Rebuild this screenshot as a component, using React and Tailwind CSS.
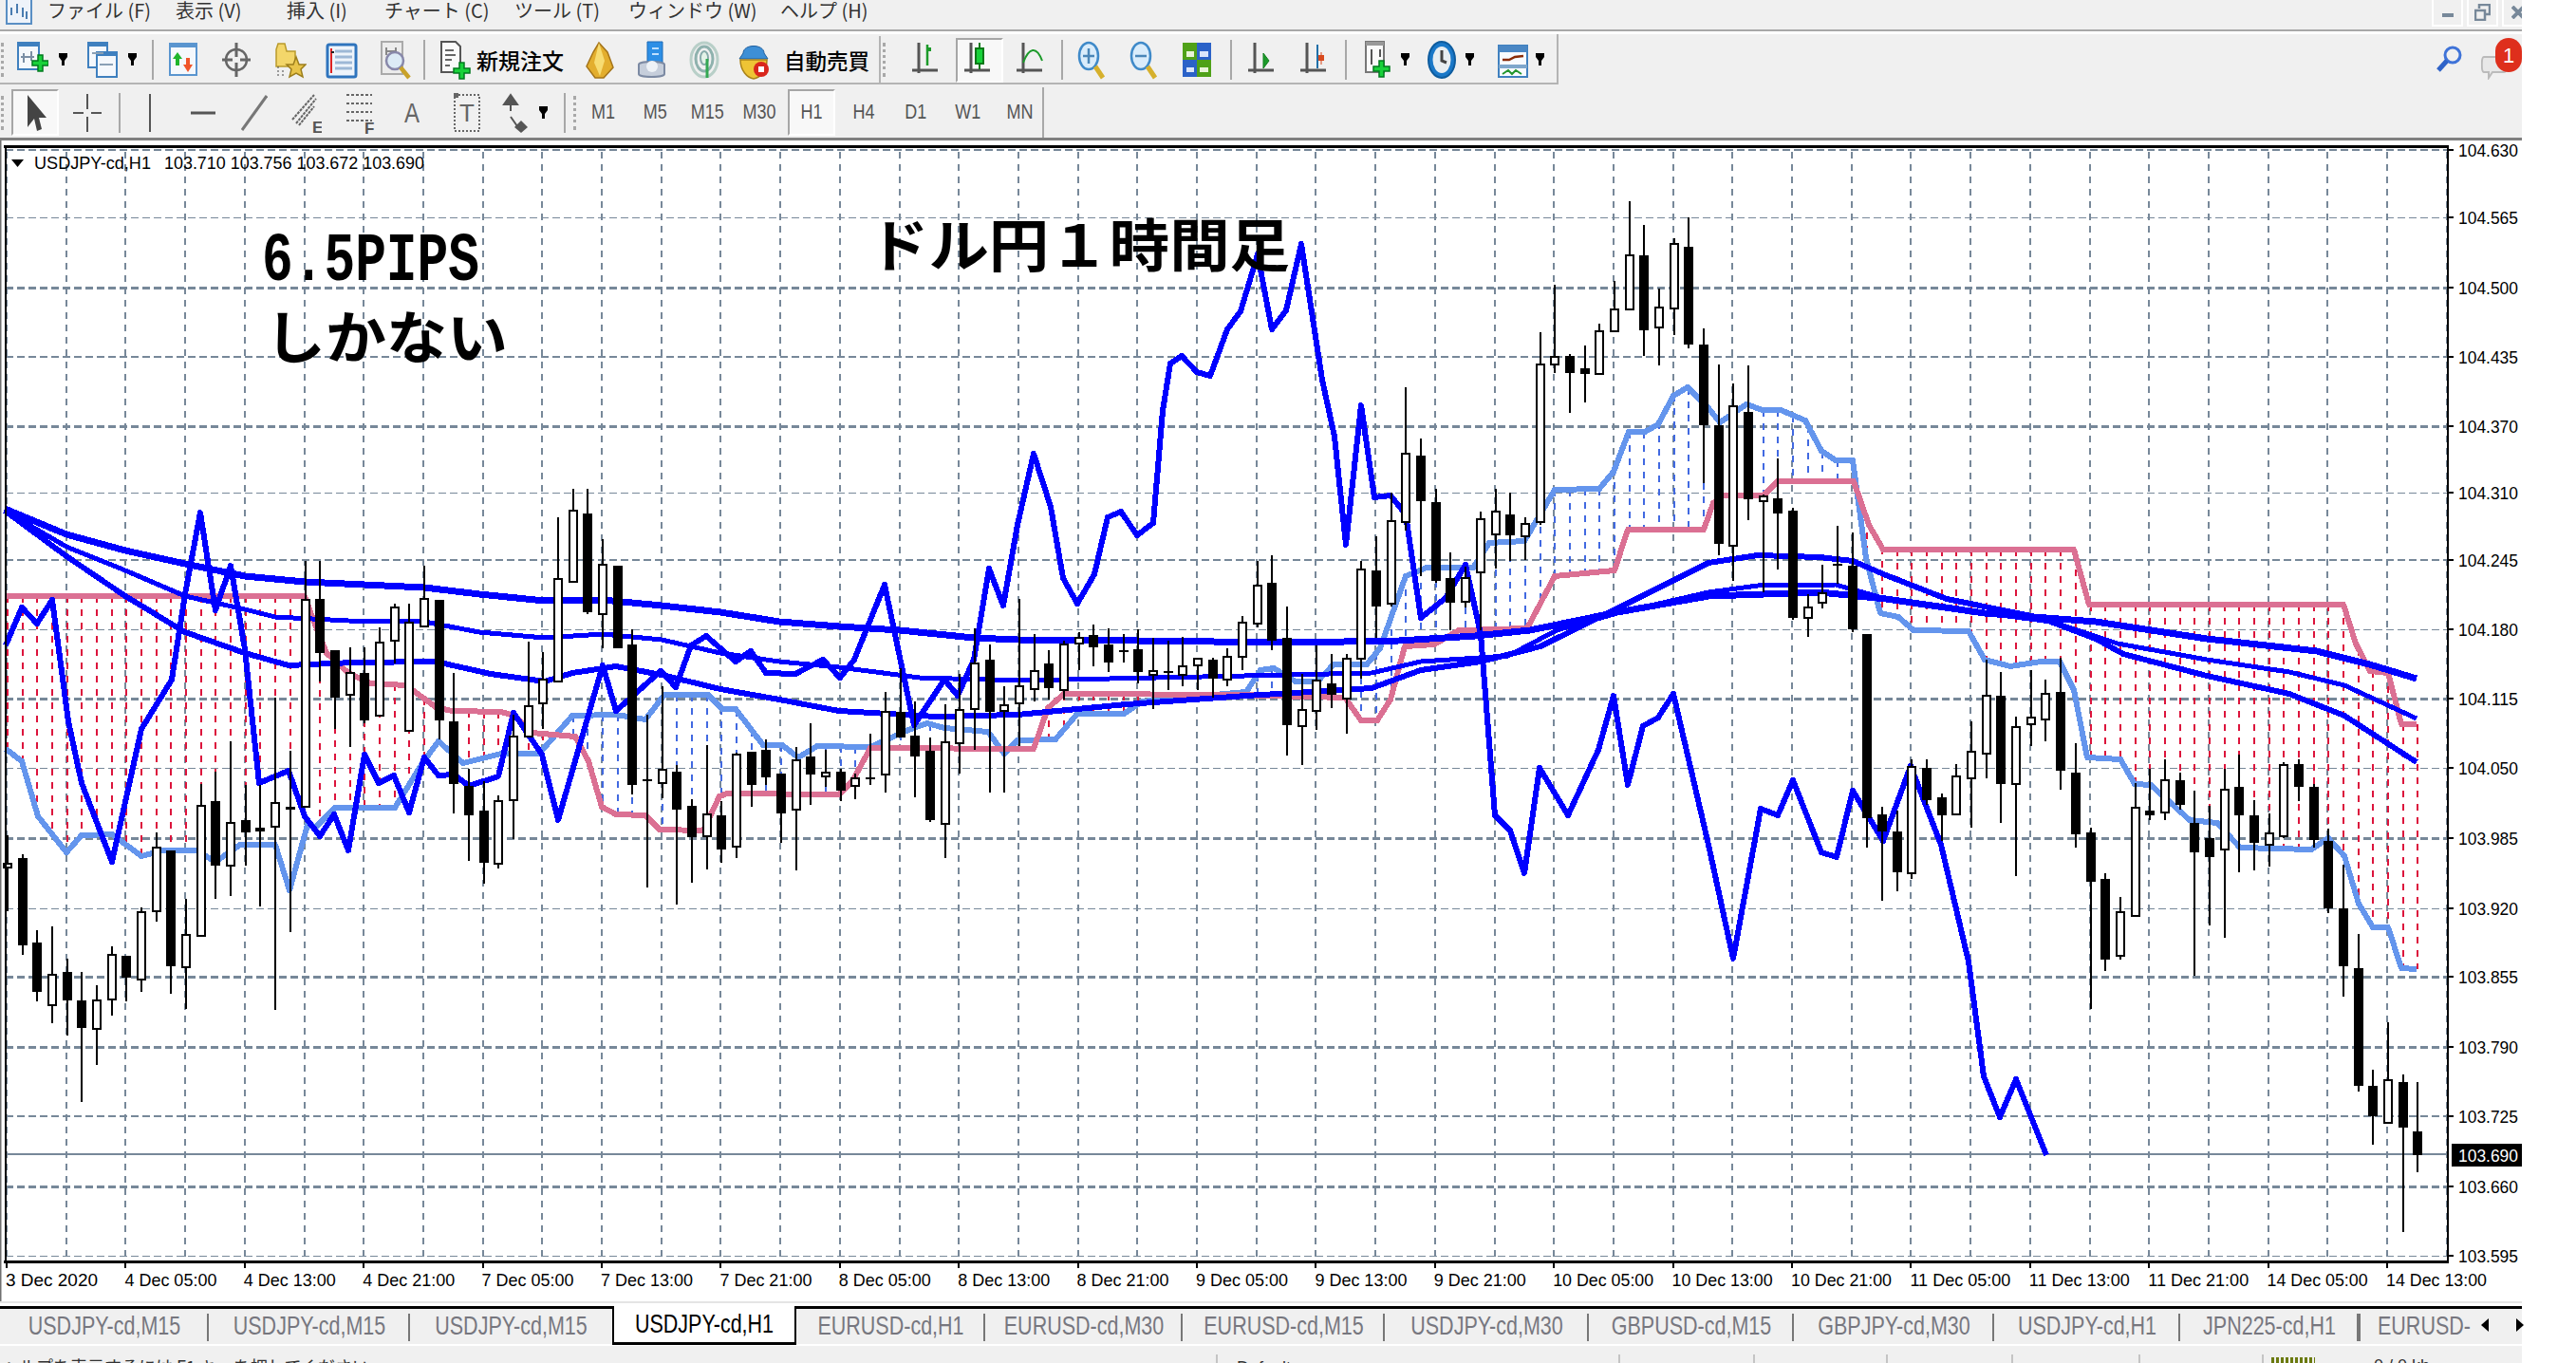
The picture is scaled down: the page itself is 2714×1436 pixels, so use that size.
const C = [
[910,914,880,960,0],[904,996,900,1006,1],[993,1045,980,1055,1],[1027,1059,976,1078,0],[1024,1054,1010,1091,1],[1054,1083,1024,1161,1],[1054,1084,1038,1122,0],[1006,1053,997,1070,0],[1007,1030,1007,1055,1],[961,1032,956,1045,0],
[893,960,877,971,0],[896,1018,896,1047,1],[985,1019,947,1063,0],[849,986,826,986,0],[844,912,813,947,1],[867,912,781,944,0],[864,877,827,912,1],[872,876,827,955,1],[846,871,735,1064,0],[850,853,791,982,1],
[632,850,591,850,0],[631,688,591,718,1],[685,735,685,768,1],[709,732,682,787,0],[709,759,682,762,1],[677,754,661,754,0],[640,675,636,699,0],[656,770,636,770,0],[631,660,596,660,0],[632,759,632,779,1],
[760,826,709,857,1],[828,859,810,907,1],[854,909,823,931,1],[844,910,838,915,0],[776,843,753,884,0],[744,776,676,776,0],[716,741,687,768,0],[610,718,545,718,0],[538,613,515,613,0],[541,645,515,647,1],
[595,647,568,683,0],[596,683,596,683,1],[679,827,663,837,1],[821,823,753,935,1],[811,825,723,841,0],[813,853,806,953,1],[849,882,842,930,1],[858,881,785,916,0],[859,895,844,909,1],[795,892,793,904,0],
[792,827,792,850,1],[790,819,779,827,1],[815,857,815,888,1],[801,853,787,917,0],[797,816,762,848,1],[814,818,790,829,0],[813,833,810,844,1],[820,828,815,842,0],[819,821,773,827,1],[750,816,729,835,0],
[750,777,704,777,1],[775,797,739,840,1],[791,864,777,866,1],[782,868,742,904,0],[748,783,710,815,0],[699,747,662,790,0],[695,750,679,835,1],[743,749,723,835,0],[723,741,631,786,0],[707,726,668,739,0],
[699,725,685,737,1],[679,727,675,737,0],[672,678,666,706,0],[669,682,658,702,1],[679,698,662,708,1],[685,687,668,698,1],[684,708,663,720,1],[707,711,672,747,0],[707,709,675,727,1],[702,711,671,723,0],
[694,701,694,727,0],[695,715,693,735,1],[692,716,683,723,0],[656,692,649,706,0],[617,657,591,661,0],[614,675,585,685,1],[672,764,639,796,1],[748,765,710,806,0],[717,749,680,769,0],[720,732,689,746,1],
[694,736,689,773,0],[600,694,591,715,0],[601,639,565,672,1],[549,636,519,639,0],[478,550,408,559,0],[480,528,462,607,1],[529,612,515,614,1],[609,635,582,664,1],[609,634,597,640,0],[547,603,539,664,0],
[539,563,515,599,0],[542,564,519,591,1],[552,565,545,590,0],[384,550,350,553,0],[376,384,300,393,0],[375,393,373,435,1],[388,394,364,424,1],[349,394,341,394,0],[326,349,296,349,0],[269,326,212,326,0],
[269,348,237,375,1],[324,345,304,385,0],[257,325,251,353,0],[260,363,229,367,1],[363,448,346,509,1],[448,573,384,585,1],[428,575,404,612,0],[434,526,385,548,1],[523,528,521,624,0],[525,541,483,600,1],
[538,651,535,653,1],[640,651,626,671,0],[625,635,595,641,0],[594,596,554,615,1],[596,663,561,666,1],[668,862,668,893,1],[858,876,850,949,1],[876,919,854,939,1],[808,920,800,926,0],[809,843,800,848,1],
[840,859,836,886,1],[818,858,805,859,0],[792,820,760,872,0],[733,794,695,820,0],[733,826,708,867,1],[766,826,755,923,0],[756,763,706,786,0],[731,758,716,781,0],[729,812,693,832,1],[814,879,783,893,1],
[877,929,872,1063,1],[926,1011,920,1023,1],[961,1007,945,1011,0],[851,965,825,966,0],[854,859,810,864,1],[822,856,800,864,0],[822,848,814,853,1],[867,898,833,1028,1],[883,903,849,975,1],[832,895,810,988,0],
[829,859,795,919,1],[859,888,843,917,1],[878,890,857,913,0],[806,881,803,883,0],[805,829,800,844,1],[829,885,826,893,1],[886,957,873,962,1],[957,1018,911,1050,1],[1020,1144,984,1150,1],[1144,1176,1127,1206,1],
[1138,1183,1077,1184,0],[1140,1188,1132,1298,1],[1192,1217,1140,1235,1],
];

const PINK = [[5,628],[321,628],[330,653],[344,688],[367,709],[390,720],[428,722],[459,745],[476,749],[528,750],[542,754],[560,772],[606,776],[620,802],[634,850],[649,858],[680,859],[695,874],[741,875],[758,839],[766,836],[884,837],[898,823],[917,788],[1089,789],[1104,746],[1121,731],[1302,732],[1417,735],[1434,759],[1451,759],[1465,737],[1480,681],[1511,679],[1537,664],[1609,662],[1638,607],[1701,601],[1715,558],[1795,558],[1805,530],[1815,522],[1858,522],[1873,507],[1953,507],[1969,553],[1984,579],[2185,579],[2201,637],[2469,637],[2482,678],[2497,707],[2516,709],[2530,763],[2546,763]];
const LIGHT = [[6,789],[23,802],[40,860],[70,898],[86,880],[118,879],[149,902],[172,896],[207,896],[227,908],[253,890],[290,890],[305,938],[324,869],[333,871],[353,851],[416,851],[445,804],[462,781],[488,804],[528,794],[568,794],[603,754],[649,753],[680,758],[700,732],[746,732],[761,747],[775,747],[804,785],[824,785],[841,798],[861,786],[917,787],[957,769],[977,762],[995,767],[1041,771],[1058,794],[1072,780],[1112,779],[1135,752],[1184,752],[1204,739],[1313,729],[1328,706],[1342,704],[1365,718],[1388,718],[1405,700],[1440,700],[1454,683],[1481,607],[1503,598],[1552,598],[1569,572],[1606,570],[1638,516],[1685,515],[1700,497],[1716,455],[1733,455],[1747,447],[1763,417],[1778,408],[1800,430],[1812,445],[1840,426],[1857,432],[1876,432],[1902,443],[1919,475],[1934,485],[1952,485],[1966,588],[1981,646],[2000,650],[2016,664],[2074,665],[2091,695],[2118,702],[2150,697],[2170,697],[2185,727],[2199,798],[2234,800],[2249,826],[2266,827],[2307,864],[2336,867],[2360,893],[2435,895],[2453,883],[2470,902],[2485,952],[2500,977],[2516,977],[2530,1020],[2546,1021]];
const CHIKOU = [[6,680],[23,640],[39,657],[55,632],[72,760],[86,825],[118,908],[149,768],[181,716],[195,626],[211,540],[227,643],[243,596],[258,684],[273,825],[304,812],[321,860],[337,881],[352,858],[367,896],[384,795],[399,825],[415,817],[431,856],[447,798],[462,817],[478,816],[494,828],[525,818],[541,751],[571,795],[588,864],[635,701],[649,749],[696,707],[712,724],[728,680],[744,670],[775,697],[791,686],[807,709],[838,710],[867,695],[885,714],[900,695],[932,616],[963,764],[995,716],[1009,733],[1026,695],[1042,599],[1057,638],[1072,553],[1089,478],[1107,534],[1120,609],[1135,636],[1153,605],[1167,545],[1181,539],[1198,564],[1215,551],[1225,433],[1233,383],[1245,375],[1261,392],[1275,396],[1293,347],[1307,328],[1325,268],[1340,347],[1355,327],[1371,257],[1393,400],[1406,460],[1418,574],[1434,427],[1448,524],[1465,522],[1481,542],[1497,651],[1523,630],[1544,595],[1560,668],[1575,859],[1591,875],[1606,920],[1622,809],[1652,859],[1684,790],[1700,733],[1715,827],[1731,765],[1747,756],[1763,731],[1800,890],[1826,1010],[1855,852],[1873,859],[1889,822],[1919,898],[1935,903],[1952,833],[1984,886],[2013,807],[2045,890],[2074,1013],[2090,1134],[2107,1177],[2124,1137],[2156,1217]];
const MA_A = [[5,536],[70,563],[132,580],[195,594],[258,607],[321,613],[447,619],[505,626],[574,633],[635,632],[697,638],[759,645],[821,655],[884,660],[948,664],[1026,672],[1072,674],[1198,675],[1359,677],[1474,675],[1554,670],[1612,664],[1704,645],[1800,628],[1917,624],[1987,631],[2091,646],[2208,655],[2325,673],[2441,686],[2500,701],[2546,715]];
const MA_B = [[5,538],[70,576],[132,601],[195,628],[258,642],[290,650],[367,654],[447,655],[505,666],[574,672],[635,668],[697,674],[759,688],[821,697],[884,703],[969,714],[1072,717],[1267,713],[1445,709],[1497,697],[1589,691],[1640,664],[1704,646],[1800,624],[1852,617],[1934,616],[1987,631],[2062,642],[2161,655],[2231,678],[2325,695],[2412,708],[2470,722],[2546,757]];
const MA_C = [[5,538],[70,586],[132,628],[195,666],[258,688],[304,701],[373,698],[459,697],[517,710],[574,718],[603,709],[649,702],[697,711],[759,726],[821,737],[884,749],[986,755],[1072,753],[1187,742],[1313,733],[1445,725],[1497,706],[1560,697],[1623,681],[1704,641],[1800,593],[1852,585],[1917,587],[1952,591],[1987,606],[2051,631],[2150,651],[2208,673],[2237,689],[2325,712],[2412,731],[2470,754],[2546,803]];

const PRICES = [["104.630",158,2],["104.565",229,1],["104.500",303,3],["104.435",376,2],["104.370",449,3],["104.310",519,1],["104.245",590,2],["104.180",663,1],["104.115",736,3],["104.050",809,1],["103.985",883,3],["103.920",957,1],["103.855",1029,3],["103.790",1103,3],["103.725",1176,2],["103.660",1250,3],["103.595",1323,1]];
const DATES = ["3 Dec 2020","4 Dec 05:00","4 Dec 13:00","4 Dec 21:00","7 Dec 05:00","7 Dec 13:00","7 Dec 21:00","8 Dec 05:00","8 Dec 13:00","8 Dec 21:00","9 Dec 05:00","9 Dec 13:00","9 Dec 21:00","10 Dec 05:00","10 Dec 13:00","10 Dec 21:00","11 Dec 05:00","11 Dec 13:00","11 Dec 21:00","14 Dec 05:00","14 Dec 13:00"];

const pts = (a) => a.map((p) => p.join(",")).join(" ");
const at = (a, x) => {
  for (let i = 1; i < a.length; i++) {
    if (x <= a[i][0]) {
      const t = (x - a[i - 1][0]) / (a[i][0] - a[i - 1][0]);
      return a[i - 1][1] + t * (a[i][1] - a[i - 1][1]);
    }
  }
  return a[a.length - 1][1];
};
const cx = (i) => 8 + 15.675 * i;
const SANS = "'Liberation Sans', sans-serif";
const CJK = "'Noto Sans CJK JP', sans-serif";

function Chart() {
  const cloud = [];
  for (let i = 0; i < 163; i++) {
    const x = Math.round(cx(i));
    const p = at(PINK, x);
    const l = at(LIGHT, x);
    cloud.push(<line key={i} x1={x} x2={x} y1={Math.min(p, l)} y2={Math.max(p, l)} stroke={p < l ? "#dc143c" : "#4169e1"} strokeWidth="2" strokeDasharray="7 7" />);
  }
  return (
    <svg className="block w-[2657px] h-[1225px] shrink-0" viewBox="0 148 2657 1225">
      <rect x="0" y="148" width="2657" height="1225" fill="#ffffff" />
      <rect x="0" y="148" width="1.5" height="1224" fill="#707070" />
      <rect x="0" y="1371" width="2657" height="2" fill="#e4e4e4" />
      <g shapeRendering="crispEdges">
        {Array.from({ length: 42 }, (_, k) => {
          const x = Math.round(7 + 62.7 * k);
          return <line key={k} x1={x} x2={x} y1="160" y2="1328" stroke="#778899" strokeWidth="2" strokeDasharray="7 6" />;
        })}
        {PRICES.map(([l, y, w]) => (
          <line key={l} x1="6" x2="2578" y1={y} y2={y} stroke="#778899" strokeWidth={w} strokeDasharray="8 4" />
        ))}
        {cloud}
        <line x1="6" x2="2578" y1="1216" y2="1216" stroke="#778899" strokeWidth="2" />
      </g>
      <g fill="none" strokeLinejoin="round" shapeRendering="crispEdges">
        <polyline points={pts(LIGHT)} stroke="#6495ed" strokeWidth="6" />
        <polyline points={pts(PINK)} stroke="#db7093" strokeWidth="6" />
        <polyline points={pts(CHIKOU)} stroke="#0000ff" strokeWidth="6" />
        <polyline points={pts(MA_C)} stroke="#0000ff" strokeWidth="6" />
        <polyline points={pts(MA_B)} stroke="#0000ff" strokeWidth="5" />
        <polyline points={pts(MA_A)} stroke="#0000ff" strokeWidth="7" />
      </g>
      <g shapeRendering="crispEdges">
        {C.map((c, i) => {
          const x = Math.round(cx(i));
          return (
            <g key={i}>
              <rect x={x - 1} y={c[2]} width="2" height={c[3] - c[2]} fill="#000" />
              {c[4] ? (
                <rect x={x - 5} y={c[0]} width="10" height={c[1] - c[0]} fill="#000" />
              ) : (
                <rect x={x - 4} y={c[0]} width="8" height={c[1] - c[0]} fill="#fff" stroke="#000" strokeWidth="2" />
              )}
            </g>
          );
        })}
        <rect x="4" y="153" width="2576" height="3" fill="#000" />
        <rect x="2578" y="153" width="2" height="1178" fill="#000" />
        <rect x="4" y="1328" width="2576" height="3" fill="#000" />
        <rect x="5" y="153" width="1.5" height="1175" fill="#000" />
        {PRICES.map(([l, y]) => <rect key={l} x="2580" y={y - 1} width="5" height="2" fill="#000" />)}
        {DATES.map((d, k) => <rect key={d} x={Math.round(6 + 125.4 * k)} y="1331" width="2" height="5" fill="#000" />)}
      </g>
      <polygon points="12,168 25,168 18.5,176" fill="#000" />
      <text x="36" y="178" fontFamily={SANS} fontSize="19" fill="#000" textLength="123" lengthAdjust="spacingAndGlyphs">USDJPY-cd,H1</text>
      <text x="173" y="178" fontFamily={SANS} fontSize="19" fill="#000" textLength="274" lengthAdjust="spacingAndGlyphs">103.710 103.756 103.672 103.690</text>
      {PRICES.map(([l, y]) => (
        <text key={l} x="2590" y={y + 7} fontFamily={SANS} fontSize="19" fill="#000" textLength="63" lengthAdjust="spacingAndGlyphs">{l}</text>
      ))}
      {DATES.map((d, k) => (
        <text key={d} x={6 + 125.4 * k} y="1355" fontFamily={SANS} fontSize="19" fill="#000" textLength={d.length === 12 ? 106 : 97} lengthAdjust="spacingAndGlyphs">{d}</text>
      ))}
      <rect x="2583" y="1205" width="74" height="24" fill="#000" />
      <text x="2590" y="1224" fontFamily={SANS} fontSize="19" fill="#fff" textLength="63" lengthAdjust="spacingAndGlyphs">103.690</text>
      <text x="276" y="295" fontFamily="'Liberation Mono', monospace" fontWeight="700" fontSize="72" fill="#000" textLength="229" lengthAdjust="spacingAndGlyphs">6.5PIPS</text>
      <text x="279" y="378" fontFamily={CJK} fontWeight="700" fontSize="60" fill="#000" textLength="256" lengthAdjust="spacingAndGlyphs">しかない</text>
      <text x="915" y="281" fontFamily={CJK} fontWeight="700" fontSize="60" fill="#000" textLength="444" lengthAdjust="spacingAndGlyphs">ドル円１時間足</text>
    </svg>
  );
}

const Sep = ({ c }) => <div className={"w-[2px] h-[42px] bg-[#a8a8a8] shrink-0 " + c} />;
const Grip = ({ c }) => <div className={"w-[3px] h-[36px] border-l-[3px] border-dotted border-[#a8a8a8] shrink-0 " + c} />;
const Drop = ({ c }) => (
  <svg className={"w-[9px] h-[14px] shrink-0 " + c} viewBox="0 0 9 14"><path d="M0 0H9V4L6 8V13H3V8L0 4Z" fill="#000" /></svg>
);
const Ico = ({ c, children }) => (
  <svg className={"w-[34px] h-[42px] shrink-0 " + c} viewBox="0 0 34 42">{children}</svg>
);
const GreenPlus = ({ x = 16, y = 18 }) => (
  <path transform={`translate(${x} ${y})`} d="M6 0H11V6H17V11H11V17H6V11H0V6H6Z" fill="#19d13a" stroke="#007a1e" strokeWidth="1.5" />
);
const Doc = ({ x, y, w, h, s = "#3f80bf" }) => (
  <g>
    <rect x={x} y={y} width={w} height={h} fill="#f5f8fc" stroke={s} strokeWidth="2" />
    <rect x={x} y={y} width={w} height="4" fill={s} />
  </g>
);
const Axis = ({ children }) => (
  <>
    <path d="M8 3V35M1 32H28" stroke="#555" strokeWidth="3" fill="none" />
    {children}
  </>
);

function Row1() {
  return (
    <div className="flex items-center w-[1642px] h-[53px] pt-[3px] border-r-2 border-b-2 border-[#b4b4b4] shrink-0">
      <Grip c="ml-px" />
      <Ico c="ml-[13px]"><Doc x={2} y={3} w={22} h={28} /><path d="M8 14V24M16 12V22M5 18H19" stroke="#7a8ea5" strokeWidth="2" /><GreenPlus x={17} y={16} /></Ico>
      <Drop c="ml-[11px]" />
      <Ico c="ml-[20px]"><Doc x={2} y={3} w={20} h={26} /><Doc x={11} y={13} w={21} h={26} /><path d="M6 14H18M14 26H28" stroke="#8aa0b5" strokeWidth="2" /></Ico>
      <Drop c="ml-[10px]" />
      <Sep c="ml-[16px]" />
      <Ico c="ml-[14px]"><Doc x={3} y={4} w={28} h={33} s="#5a95cf" /><path d="M11 13L16 20H13V27H9V20H6Z" fill="#1fb52c" /><path d="M22 34L27 26H24V19H20V26H17Z" fill="#f0552a" /></Ico>
      <Ico c="ml-[23px]"><circle cx="16" cy="21" r="11" fill="none" stroke="#666" strokeWidth="2.5" /><path d="M16 3V39M1 21H31" stroke="#666" strokeWidth="3" /><rect x="12" y="18" width="8" height="6" fill="#f0f0f0" /></Ico>
      <Ico c="ml-[22px]"><path d="M2 10V28H22V12H13L11 4H4Z" fill="#f3d66a" stroke="#b99a2c" strokeWidth="1.5" /><path d="M4 28V40M9 32V40" stroke="#444" strokeDasharray="2 2" /><path d="M23 18L26 26L33 26L28 31L30 39L23 35L16 39L18 31L13 26L20 26Z" fill="#e8c44a" stroke="#9c7e1c" strokeWidth="1.5" /></Ico>
      <Ico c="ml-[20px]"><rect x="2" y="5" width="30" height="34" rx="2" fill="#eef4fb" stroke="#2f74bd" strokeWidth="3" /><path d="M6 9V35" stroke="#d22" strokeWidth="2" /><path d="M10 12H28M10 18H28M10 24H28M10 30H28" stroke="#9db8d6" strokeWidth="3" /><rect x="6" y="12" width="3" height="2" fill="#222" /></Ico>
      <Ico c="ml-[22px]"><rect x="3" y="2" width="22" height="34" fill="#ececec" stroke="#aaa" strokeWidth="2" /><path d="M8 8V16M18 8V16M8 12H18" stroke="#888" strokeWidth="2" /><circle cx="17" cy="22" r="9" fill="#dcebf6" stroke="#88a" strokeWidth="2.5" /><path d="M23 29L32 40" stroke="#c9a22a" strokeWidth="4.5" /></Ico>
      <Sep c="ml-[13px]" />
      <Ico c="ml-[14px]"><path d="M3 2H18L23 7V34H3Z" fill="#fafafa" stroke="#555" strokeWidth="2" /><path d="M7 11H16M7 16H18M7 21H14M7 27H12" stroke="#666" strokeWidth="2" /><GreenPlus x={16} y={24} /></Ico>
      <span className="ml-[6px] font-['Noto_Sans_CJK_JP'] text-[23px] leading-[30px] text-black font-medium whitespace-nowrap">新規注文</span>
      <Ico c="ml-[21px]"><path d="M16 3L25 13L31 29L21 40H12L3 28L10 13Z" fill="#e3ae2e" stroke="#a4741a" strokeWidth="1.5" /><path d="M16 3L11 24L17 38L22 22Z" fill="#f7dc72" /></Ico>
      <Ico c="ml-[21px]"><path d="M12 2H28V24H12Z" fill="#2d8fe6" stroke="#1e6ab5" /><path d="M17 9H24M17 15H24" stroke="#bfe0ff" strokeWidth="2" /><path d="M3 26C3 22 30 22 30 26V36C30 40 3 40 3 36Z" fill="#c6cedb" stroke="#7c8aa3" strokeWidth="2" /><circle cx="17" cy="28" r="6" fill="#eef2f7" /></Ico>
      <Ico c="ml-[21px]"><ellipse cx="17" cy="21" rx="14" ry="18" fill="none" stroke="#b8cfc8" strokeWidth="3" /><ellipse cx="17" cy="20" rx="9" ry="13" fill="none" stroke="#8fb2ae" strokeWidth="3" /><ellipse cx="17" cy="19" rx="4" ry="7" fill="#e4f2e8" stroke="#8aa" strokeWidth="2" /><path d="M20 20V40" stroke="#34a853" strokeWidth="3" /></Ico>
      <Ico c="ml-[18px]"><path d="M6 14C6 4 28 4 28 14L32 20H2Z" fill="#3d8fd6" stroke="#1f5f9f" /><path d="M3 21H31C31 32 24 40 17 41C10 40 3 32 3 21Z" fill="#eec435" stroke="#a9831a" strokeWidth="1.5" /><circle cx="25" cy="31" r="8" fill="#d9261c" /><rect x="22" y="28" width="6" height="6" fill="#fff" /></Ico>
      <span className="ml-[15px] font-['Noto_Sans_CJK_JP'] text-[22.5px] leading-[30px] text-black font-medium whitespace-nowrap">自動売買</span>
      <div className="ml-[10px] w-[2px] h-[50px] bg-[#b4b4b4] shrink-0" />
      <Grip c="ml-[2px]" />
      <Ico c="ml-[27px]"><Axis><path d="M17 5V27" stroke="#1c9a2a" strokeWidth="2.5" /><path d="M17 10H21" stroke="#1c9a2a" strokeWidth="4" /></Axis></Ico>
      <div className="ml-[13px] w-[50px] h-[47px] flex items-center justify-center border-2 border-t-[#a6a6a6] border-l-[#a6a6a6] border-r-white border-b-white bg-[#f8f8f8] shrink-0">
        <Ico c=""><Axis><path d="M17 3V31" stroke="#0a7a18" strokeWidth="2" /><rect x="13" y="9" width="8" height="16" fill="#18d13a" stroke="#0a7a18" strokeWidth="2" /></Axis></Ico>
      </div>
      <Ico c="ml-[13px]"><Axis><path d="M8 24C14 8 22 6 28 22" stroke="#1c9a2a" strokeWidth="2" fill="none" /></Axis></Ico>
      <Sep c="ml-[14px]" />
      <Ico c="ml-[14px]"><ellipse cx="13" cy="17" rx="10" ry="14" fill="#d9ecfb" stroke="#3f8ac9" strokeWidth="2.5" /><path d="M7 17H19M13 9V25" stroke="#4a86b8" strokeWidth="2.5" /><path d="M20 28L28 40" stroke="#d6b02c" strokeWidth="5" /></Ico>
      <Ico c="ml-[21px]"><ellipse cx="13" cy="17" rx="10" ry="14" fill="#d9ecfb" stroke="#3f8ac9" strokeWidth="2.5" /><path d="M7 17H19" stroke="#4a86b8" strokeWidth="2.5" /><path d="M20 28L28 40" stroke="#d6b02c" strokeWidth="5" /></Ico>
      <Ico c="ml-[21px]"><rect x="2" y="3" width="15" height="18" fill="#4fa118" /><rect x="17" y="3" width="15" height="18" fill="#2b62c8" /><rect x="2" y="21" width="15" height="18" fill="#2b62c8" /><rect x="17" y="21" width="15" height="18" fill="#4fa118" /><rect x="6" y="12" width="8" height="6" fill="#e8f4d8" /><rect x="20" y="12" width="9" height="6" fill="#dbe6fb" /><rect x="6" y="29" width="8" height="5" fill="#dbe6fb" /><rect x="20" y="29" width="9" height="5" fill="#e8f4d8" /></Ico>
      <Sep c="ml-[18px]" />
      <Ico c="ml-[16px]"><Axis><path d="M17 14V30L23 22Z" fill="#1c9a2a" stroke="#0f7f1c" /></Axis></Ico>
      <Ico c="ml-[21px]"><Axis><path d="M19 5V30" stroke="#1f6fa8" strokeWidth="2" /><path d="M20 16H26V22H20Z" fill="#d8491d" /><path d="M23 13V26" stroke="#d8491d" /></Axis></Ico>
      <Sep c="ml-[14px]" />
      <Ico c="ml-[17px]"><path d="M3 2H22V34H3Z" fill="#fafafa" stroke="#777" strokeWidth="2" /><rect x="3" y="2" width="19" height="4" fill="#999" /><path d="M9 10V26M18 10V18" stroke="#555" strokeWidth="2" /><GreenPlus x={11} y={22} /></Ico>
      <Drop c="ml-[6px]" />
      <Ico c="ml-[17px]"><ellipse cx="17" cy="21" rx="14" ry="19" fill="#1a78c8" stroke="#0e5c9e" strokeWidth="2" /><ellipse cx="17" cy="21" rx="9.5" ry="14" fill="#e8eef2" /><path d="M17 11V22L22 24" stroke="#444" strokeWidth="3" fill="none" /></Ico>
      <Drop c="ml-[8px]" />
      <Ico c="ml-[24px]"><rect x="2" y="6" width="30" height="33" fill="#f8fbff" stroke="#3f80bf" strokeWidth="2" /><rect x="2" y="6" width="30" height="7" fill="#4a87c4" /><rect x="2" y="26" width="30" height="4" fill="#7fa7cc" /><path d="M6 21H13L19 18L28 17" stroke="#8a2c08" strokeWidth="2.5" fill="none" /><path d="M6 36L12 32L16 36L20 32L26 36" stroke="#24962e" strokeWidth="2" fill="none" /></Ico>
      <Drop c="ml-[7px]" />
    </div>
  );
}

const TF = ["M1", "M5", "M15", "M30", "H1", "H4", "D1", "W1", "MN"];

function Row2() {
  return (
    <div className="flex items-center w-[1100px] h-[53px] border-r-2 border-[#a8a8a8] shrink-0">
      <Grip c="ml-px" />
      <div className="ml-[8px] w-[50px] h-[49px] flex items-center justify-center border-2 border-t-[#a6a6a6] border-l-[#a6a6a6] border-r-white border-b-white bg-[#f8f8f8] shrink-0">
        <svg className="w-[26px] h-[42px]" viewBox="0 0 26 42"><path d="M5 2V36L12 27L15 40L20 38L17 26H25Z" fill="#444" /></svg>
      </div>
      <svg className="ml-[15px] w-[30px] h-[42px] shrink-0" viewBox="0 0 30 42"><path d="M15 1V17M15 25V41M0 21H11M19 21H30" stroke="#555" strokeWidth="2" /></svg>
      <Sep c="ml-[18px]" />
      <svg className="ml-[29px] w-[4px] h-[40px] shrink-0" viewBox="0 0 4 40"><path d="M2 0V40" stroke="#555" strokeWidth="2" /></svg>
      <svg className="ml-[41px] w-[26px] h-[4px] shrink-0" viewBox="0 0 26 4"><path d="M0 2H26" stroke="#555" strokeWidth="3" /></svg>
      <svg className="ml-[27px] w-[28px] h-[40px] shrink-0" viewBox="0 0 28 40"><path d="M1 38L27 2" stroke="#777" strokeWidth="3" /></svg>
      <svg className="ml-[25px] w-[32px] h-[46px] shrink-0" viewBox="0 0 32 46"><path d="M1 30L24 4M5 34L26 8M8 36L24 16" stroke="#666" strokeWidth="2" strokeDasharray="3 1" /><text x="22" y="44" fontFamily={SANS} fontSize="17" fontWeight="700" fill="#555">E</text></svg>
      <svg className="ml-[25px] w-[32px] h-[46px] shrink-0" viewBox="0 0 32 46"><path d="M1 4H28M1 13H28M1 22H28M1 31H28" stroke="#666" strokeWidth="2" strokeDasharray="3 2" /><text x="20" y="45" fontFamily={SANS} fontSize="17" fontWeight="700" fill="#555">F</text></svg>
      <span className="ml-[27px] w-[22px] font-['Liberation_Sans'] text-[24px] text-[#666] scale-y-[1.25] shrink-0 text-center">A</span>
      <svg className="ml-[33px] w-[28px] h-[42px] shrink-0" viewBox="0 0 28 42"><path d="M1 2H27V40H1Z" fill="none" stroke="#666" strokeWidth="2" strokeDasharray="2 2" /><rect x="0" y="0" width="5" height="5" fill="#666" /><text x="14" y="30" textAnchor="middle" fontFamily={SANS} fontSize="26" fill="#666">T</text></svg>
      <svg className="ml-[23px] w-[30px] h-[44px] shrink-0" viewBox="0 0 30 44"><path d="M9 3L16 13H2ZM9 13V20M9 26L16 36" stroke="#555" fill="#555" strokeWidth="2" /><path d="M20 30L27 37L20 43L13 37Z" fill="#555" /></svg>
      <Drop c="ml-[9px]" />
      <Sep c="ml-[17px]" />
      <Grip c="ml-[8px]" />
      <div className="ml-[1px] flex">
        {TF.map((t) => (
          <div key={t} className="w-[54.9px] h-[50px] flex items-center justify-center shrink-0">
            <div className={t === "H1" ? "w-[50px] h-[49px] flex items-center justify-center border-2 border-t-[#a6a6a6] border-l-[#a6a6a6] border-r-white border-b-white bg-[#f8f8f8]" : "flex items-center justify-center"}>
              <span className="font-['Liberation_Sans'] text-[18px] text-[#555] scale-y-[1.25]">{t}</span>
            </div>
          </div>
        ))}
      </div>
    </div>
  );
}

const TABS = [
  ["USDJPY-cd,M15", "w-[220px]"], ["USDJPY-cd,M15", "w-[212px]"], ["USDJPY-cd,M15", "w-[213px]"], ["USDJPY-cd,H1", "w-[194px]", 1],
  ["EURUSD-cd,H1", "w-[199px]"], ["EURUSD-cd,M30", "w-[208px]"], ["EURUSD-cd,M15", "w-[213px]"], ["USDJPY-cd,M30", "w-[215px]"],
  ["GBPUSD-cd,M15", "w-[216px]"], ["GBPJPY-cd,M30", "w-[211px]"], ["USDJPY-cd,H1", "w-[196px]"], ["JPN225-cd,H1", "w-[188px]"],
];

function Tabs() {
  return (
    <div className="flex items-start w-[2657px] h-[42px] bg-[#f0f0f0] border-t-[3px] border-black border-b-2 border-b-white shrink-0 font-['Liberation_Sans']">
      {TABS.map(([t, w, a], i) => (
        <div key={i} className={w + " shrink-0 flex items-center justify-center " + (a ? "-mt-[3px] h-[41px] bg-white border-x-2 border-l-black border-r-black border-b-[3px] border-b-black" : i === 2 ? "h-[37px]" : "h-[37px] relative")}>
          <span className={"text-[21.5px] scale-y-[1.25] whitespace-nowrap " + (a ? "text-black" : "text-[#77777f]")}>{t}</span>
          {!a && i !== 2 && <div className="absolute right-0 top-[5px] w-[2px] h-[29px] bg-[#777]" />}
        </div>
      ))}
      <div className="w-[2px] h-[29px] mt-[5px] bg-[#777] shrink-0" />
      <span className="ml-[18px] mt-[2px] text-[21.5px] scale-y-[1.25] whitespace-nowrap text-[#77777f]">EURUSD-</span>
      <svg className="ml-[11px] mt-[10px] w-[8px] h-[14px] shrink-0" viewBox="0 0 8 14"><path d="M8 0V14L0 7Z" fill="#000" /></svg>
      <svg className="ml-[29px] mt-[10px] w-[8px] h-[14px] shrink-0" viewBox="0 0 8 14"><path d="M0 0V14L8 7Z" fill="#000" /></svg>
    </div>
  );
}

const STAT = ["w-[142px]", "w-[140px]", "w-[132px]", "w-[134px]", "w-[130px]"];

function Status() {
  return (
    <div className="relative flex items-start w-[2657px] h-[18px] bg-[#f0f0f0] overflow-hidden shrink-0 font-['Noto_Sans_CJK_JP'] text-[18px] leading-[24px] text-[#333]">
      <div className="w-[1281px] pt-[9px] pl-[2px] whitespace-nowrap shrink-0">ヘルプを表示するには F1 キーを押してください</div>
      <div className="w-[424px] h-[18px] border-l-2 border-[#c4c4c4] mt-[9px] shrink-0 pl-[20px] whitespace-nowrap"><span className="font-['Liberation_Sans']">Default</span></div>
      {STAT.map((w) => <div key={w} className={w + " h-[18px] border-l-2 border-[#c4c4c4] mt-[9px] shrink-0"} />)}
      <div className="border-l-2 border-[#c4c4c4] h-[18px] mt-[9px] pl-[8px] flex shrink-0">
        <div className="w-[46px] h-[6px] mt-[3px] bg-[repeating-linear-gradient(90deg,#6b7a10_0_3px,#f0f0f0_3px_5px)]" />
        <span className="ml-[62px] font-['Liberation_Sans'] whitespace-nowrap">0 / 0 kb</span>
      </div>
    </div>
  );
}

export default function App() {
  return (
    <div className="w-[2714px] h-[1436px] bg-white overflow-hidden">
      <div className="w-[2657px] flex flex-col">
        <div className="flex items-start h-[33px] bg-[#f0f0f0] border-b-2 border-[#a8a8a8] shrink-0 font-['Noto_Sans_CJK_JP'] text-[20px] leading-[22px] text-[#333] whitespace-nowrap">
          <svg className="ml-[5px] w-[30px] h-[27px] shrink-0" viewBox="0 0 30 27"><rect x="2" y="-2" width="26" height="27" fill="#eef3fa" stroke="#5a8fc4" strokeWidth="2" /><path d="M7 8V16M13 4V14M19 8V18M23 12V20" stroke="#4a7cb0" strokeWidth="2" /></svg>
          <span className="ml-[15px] w-[135px] shrink-0">ファイル (F)</span>
          <span className="w-[117px] shrink-0">表示 (V)</span>
          <span className="w-[103px] shrink-0">挿入 (I)</span>
          <span className="w-[137px] shrink-0">チャート (C)</span>
          <span className="w-[120px] shrink-0">ツール (T)</span>
          <span className="w-[160px] shrink-0">ウィンドウ (W)</span>
          <span className="shrink-0">ヘルプ (H)</span>
          <div className="ml-auto flex gap-[4px]">
            <div className="w-[33px] h-[28px] border-x-2 border-b-2 border-white flex items-end justify-center pb-[8px]"><div className="w-[12px] h-[4px] bg-[#778899]" /></div>
            <div className="w-[33px] h-[28px] border-x-2 border-b-2 border-white flex items-center justify-center">
              <svg className="w-[17px] h-[18px]" viewBox="0 0 17 18"><path d="M5 5V1H16V11H11M1 7H11V17H1Z" fill="none" stroke="#778899" strokeWidth="2.5" /></svg>
            </div>
            <div className="w-[21px] h-[28px] border-l-2 border-b-2 border-white overflow-hidden flex items-center pl-[8px]">
              <svg className="w-[14px] h-[14px] shrink-0" viewBox="0 0 14 14"><path d="M1 1L13 13M13 1L1 13" stroke="#778899" strokeWidth="4" /></svg>
            </div>
          </div>
        </div>
        <div className="h-[3px] shrink-0" />
        <div className="flex items-start h-[56px] bg-[#f0f0f0] shrink-0 relative">
          <Row1 />
          <svg className="absolute left-[2565px] top-[10px] w-[30px] h-[32px]" viewBox="0 0 30 32"><circle cx="19" cy="12" r="8" fill="none" stroke="#3f73d8" strokeWidth="3" /><path d="M13 18L4 28" stroke="#2f63c8" strokeWidth="5" /></svg>
          <svg className="absolute left-[2614px] top-[20px] w-[30px] h-[28px]" viewBox="0 0 30 28"><path d="M3 4H24C28 4 28 20 24 20H12L8 26V20H3C0 20 0 4 3 4Z" fill="#e8e8e8" stroke="#bbb" strokeWidth="2" /></svg>
          <div className="absolute left-[2629px] top-[4px] w-[28px] h-[36px] rounded-full bg-[#de2f1c] flex items-center justify-center text-white font-['Liberation_Sans'] text-[22px]">1</div>
        </div>
        <div className="flex items-start h-[56px] bg-[#f0f0f0] border-b-[3px] border-[#808080] shrink-0">
          <Row2 />
        </div>
        <Chart />
        <div className="h-[3px] shrink-0" />
        <Tabs />
        <Status />
      </div>
    </div>
  );
}
